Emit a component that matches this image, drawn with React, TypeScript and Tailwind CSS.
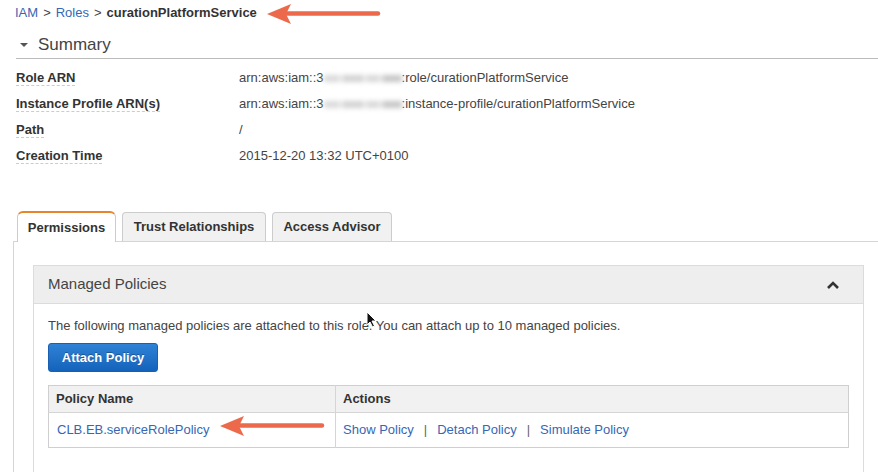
import React from "react";

function Arrow({ className, length }: { className: string; length: number }) {
  return (
    <svg className={className} width={length + 6} height={24} viewBox={`0 0 ${length + 6} 24`}>
      <path d={`M2 12 L26 2 L21 12 L26 22 Z`} fill="#ec6a4b" />
      <line x1={20} y1={11.5} x2={length} y2={11.5} stroke="#ec6a4b" strokeWidth={4.5} strokeLinecap="round" />
    </svg>
  );
}

function Blurred() {
  return (
    <span className="inline-flex w-[78px] h-[10px] items-center gap-[2px] align-middle blur-[2.5px]">
      <span className="w-[16px] h-[7px] bg-[#dadada]" />
      <span className="w-[22px] h-[7px] bg-[#d2d2d2]" />
      <span className="w-[14px] h-[7px] bg-[#d8d8d8]" />
      <span className="w-[20px] h-[7px] bg-[#c6c6c6]" />
    </span>
  );
}

export default function App() {
  const rows: [string, React.ReactNode][] = [
    [
      "Role ARN",
      <>
        arn:aws:iam::3<Blurred />:role/curationPlatformService
      </>,
    ],
    [
      "Instance Profile ARN(s)",
      <>
        arn:aws:iam::3<Blurred />:instance-profile/curationPlatformService
      </>,
    ],
    ["Path", "/"],
    ["Creation Time", "2015-12-20 13:32 UTC+0100"],
  ];
  return (
    <div
      className="relative w-[878px] h-[472px] overflow-hidden bg-white text-[13px] text-[#444]"
      style={{ fontFamily: '"Liberation Sans", Arial, sans-serif' }}
    >
      {/* Breadcrumb */}
      <div className="h-[26px] pl-[15px] flex items-center gap-[5px]">
        <span className="text-[#3567b5]">IAM</span>
        <span className="text-[#444]">&gt;</span>
        <span className="text-[#3567b5]">Roles</span>
        <span className="text-[#444]">&gt;</span>
        <span className="font-bold text-[#333]">curationPlatformService</span>
      </div>

      {/* Summary */}
      <div className="mt-[6px] ml-[16px] h-[27px] flex items-center border-b border-[#bbb]">
        <svg width="10" height="6" viewBox="0 0 10 6" className="ml-[3px] mr-[9px]">
          <path d="M1 1 L9 1 L5 5 Z" fill="#555" />
        </svg>
        <span className="text-[17px] text-[#444]">Summary</span>
      </div>

      <div className="mt-[6px] ml-[16px]">
        {rows.map(([label, value]) => (
          <div key={label} className="h-[26px] flex items-center">
            <div className="w-[223px]">
              <span className="font-bold text-[#333] border-b border-dashed border-[#ccc] leading-[15px] inline-block">{label}</span>
            </div>
            <div className="text-[#444] whitespace-nowrap flex items-center">{value}</div>
          </div>
        ))}
      </div>

      {/* Tabs */}
      <div className="mt-[42px] ml-[17px] flex items-end gap-[6px] h-[30px] relative z-10">
        <div className="h-[31px] w-[99px] -mb-px bg-white border border-[#ccc] border-t-[2px] border-t-[#e8842a] border-b-0 rounded-t-[6px] flex items-center justify-center font-bold text-[#333]">
          Permissions
        </div>
        <div className="h-[29px] w-[144px] bg-[#f1f1f1] border border-[#ccc] border-b-0 rounded-t-[4px] flex items-center justify-center font-bold text-[#333]">
          Trust Relationships
        </div>
        <div className="h-[29px] w-[120px] bg-[#f1f1f1] border border-[#ccc] border-b-0 rounded-t-[4px] flex items-center justify-center font-bold text-[#333]">
          Access Advisor
        </div>
      </div>

      {/* Tab panel */}
      <div className="ml-[13px] w-[890px] border-t border-l border-[#d5d5d5] pt-[23px] pl-[19px]">
        <div className="w-[831px] border border-[#dcdcdc]">
          <div className="h-[38px] bg-[#eeeeee] border-b border-[#dcdcdc] flex items-center justify-between pl-[14px] pr-[23px]">
            <span className="text-[15px] text-[#444]">Managed Policies</span>
            <svg width="14" height="10" viewBox="0 0 14 10">
              <path d="M2 8 L7 3 L12 8" fill="none" stroke="#333" strokeWidth="2.6" />
            </svg>
          </div>
          <div className="px-[14px] pt-[12px] pb-[40px]">
            <div className="h-[20px] leading-[20px] text-[#444]">
              The following managed policies are attached to this role. You can attach up to 10 managed policies.
            </div>
            <button className="mt-[7px] h-[29px] w-[110px] rounded-[3px] border border-[#1a5fb0] bg-gradient-to-b from-[#2f82d6] to-[#1463bb] text-white font-bold text-[13px] [text-shadow:0_-1px_0_rgba(0,0,0,0.3)]">
              Attach Policy
            </button>
            <table className="mt-[13px] w-[801px] border-collapse border border-[#cfcfcf]">
              <thead>
                <tr className="h-[27px] bg-[#f1f1f1]">
                  <th className="w-[287px] text-left font-bold text-[#333] pl-[7px] border-r border-b border-[#d5d5d5]">Policy Name</th>
                  <th className="text-left font-bold text-[#333] pl-[7px] border-b border-[#d5d5d5]">Actions</th>
                </tr>
              </thead>
              <tbody>
                <tr className="h-[35px]">
                  <td className="pl-[8px] text-[#3567b5] border-r border-[#d5d5d5]">CLB.EB.serviceRolePolicy</td>
                  <td className="pl-[7px]">
                    <span className="text-[#3567b5]">Show Policy</span>
                    <span className="mx-[10px] text-[#666]">|</span>
                    <span className="text-[#3567b5]">Detach Policy</span>
                    <span className="mx-[10px] text-[#666]">|</span>
                    <span className="text-[#3567b5]">Simulate Policy</span>
                  </td>
                </tr>
              </tbody>
            </table>
          </div>
        </div>
      </div>

      {/* Annotation arrows */}
      <Arrow className="absolute left-[265px] top-[2px]" length={113} />
      <Arrow className="absolute left-[218px] top-[414px]" length={104} />

      {/* Mouse cursor */}
      <svg className="absolute left-[366px] top-[311px]" width="11" height="17" viewBox="0 0 11 17">
        <path d="M1 1 L1 14 L4 11 L6.5 16 L8.5 15 L6 10 L10 10 Z" fill="#111" stroke="#fff" strokeWidth="1" />
      </svg>
    </div>
  );
}
